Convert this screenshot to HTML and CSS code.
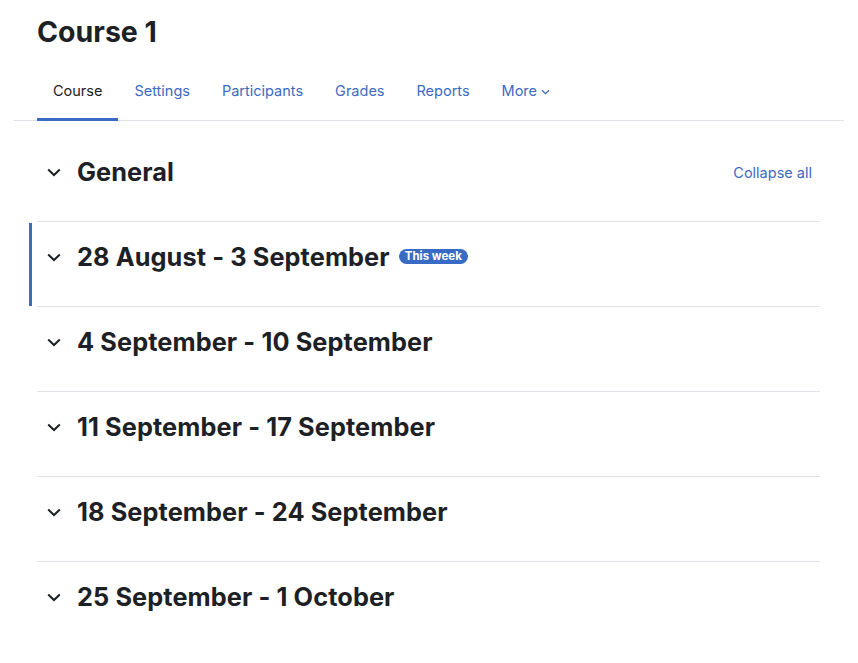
FILE: index.html
```html
<!DOCTYPE html>
<html lang="en">

<head>
      <meta charset="UTF-8">
      <meta name="viewport" content="width=device-width, initial-scale=1.0">
      <title>Course 1</title>
      <link rel="stylesheet" href="styles.css">
</head>

<body>
      <div id="page">
            <h1 class="page-title">Course 1</h1>
            <div class="secondary-nav">
                  <ul class="tabs">
                        <li class="tab active">Course</li>
                        <li class="tab">Settings</li>
                        <li class="tab">Participants</li>
                        <li class="tab">Grades</li>
                        <li class="tab">Reports</li>
                        <li class="tab">More
                              <svg class="caret" width="9" height="6" viewBox="0 0 9 6">
                                    <path d="M1 1.2 L4.5 4.6 L8 1.2" fill="none" stroke="currentColor" stroke-width="1.3" />
                              </svg>
                        </li>
                  </ul>
            </div>
            <div class="course-content">
                  <div class="section">
                        <div class="section-head">
                              <span class="toggle">
                                    <svg width="14" height="9" viewBox="0 0 14 9">
                                          <path d="M1.2 1.5 L7 7 L12.8 1.5" fill="none" stroke="currentColor" stroke-width="2" />
                                    </svg>
                              </span>
                              <h3 class="section-name">General</h3>
                              <a class="collapse-all">Collapse all</a>
                        </div>
                  </div>
                  <div class="section current">
                        <div class="section-head">
                              <span class="toggle">
                                    <svg width="14" height="9" viewBox="0 0 14 9">
                                          <path d="M1.2 1.5 L7 7 L12.8 1.5" fill="none" stroke="currentColor" stroke-width="2" />
                                    </svg>
                              </span>
                              <h3 class="section-name">28 August - 3 September</h3>
                              <span class="badge">This week</span>
                        </div>
                  </div>
                  <div class="section">
                        <div class="section-head">
                              <span class="toggle">
                                    <svg width="14" height="9" viewBox="0 0 14 9">
                                          <path d="M1.2 1.5 L7 7 L12.8 1.5" fill="none" stroke="currentColor" stroke-width="2" />
                                    </svg>
                              </span>
                              <h3 class="section-name">4 September - 10 September</h3>
                        </div>
                  </div>
                  <div class="section">
                        <div class="section-head">
                              <span class="toggle">
                                    <svg width="14" height="9" viewBox="0 0 14 9">
                                          <path d="M1.2 1.5 L7 7 L12.8 1.5" fill="none" stroke="currentColor" stroke-width="2" />
                                    </svg>
                              </span>
                              <h3 class="section-name">11 September - 17 September</h3>
                        </div>
                  </div>
                  <div class="section">
                        <div class="section-head">
                              <span class="toggle">
                                    <svg width="14" height="9" viewBox="0 0 14 9">
                                          <path d="M1.2 1.5 L7 7 L12.8 1.5" fill="none" stroke="currentColor" stroke-width="2" />
                                    </svg>
                              </span>
                              <h3 class="section-name">18 September - 24 September</h3>
                        </div>
                  </div>
                  <div class="section">
                        <div class="section-head">
                              <span class="toggle">
                                    <svg width="14" height="9" viewBox="0 0 14 9">
                                          <path d="M1.2 1.5 L7 7 L12.8 1.5" fill="none" stroke="currentColor" stroke-width="2" />
                                    </svg>
                              </span>
                              <h3 class="section-name">25 September - 1 October</h3>
                        </div>
                  </div>
            </div>
      </div>
</body>

</html>
```

FILE: styles.css
```css
* {
      box-sizing: border-box;
      font-family: Inter, Roboto, "Liberation Sans", sans-serif;
}

body {
      margin: 0;
      padding: 0;
      background: #fff;
      color: #1d2125;
}

#page {
      padding: 14px 0 0 0;
}

.page-title {
      margin: 0 0 20px 37px;
      font-size: 28.5px;
      line-height: 36px;
      font-weight: 700;
}

.secondary-nav {
      margin: 0 14px;
}

.tabs {
      display: flex;
      list-style: none;
      margin: 0;
      padding: 0 0 0 23px;
      border-bottom: 1px solid #dee2e6;
}

.tab {
      padding: 10px 16px 16px 16px;
      line-height: 22px;
      font-size: 14.5px;
      color: #3a6bc4;
      border-bottom: 3px solid transparent;
      margin-bottom: -1px;
      display: flex;
      align-items: center;
}

.tab.active {
      color: #1d2125;
      border-bottom-color: #3a6bc4;
}

.caret {
      margin-left: 4px;
      margin-top: 1px;
}

.course-content {
      margin: 15px 38px 0 37px;
}

.section {
      position: relative;
      border-top: 1px solid #dee2e6;
      padding: 20px 0 34px 0;
}

.section:first-child {
      border-top-color: transparent;
}

.section.current::before {
      content: "";
      position: absolute;
      left: -8px;
      top: 1px;
      bottom: 0;
      width: 3px;
      background: #3a6bc4;
}

.section-head {
      display: flex;
      align-items: center;
      height: 30px;
}

.toggle {
      width: 34px;
      margin-right: 6px;
      display: flex;
      justify-content: center;
      color: #1d2125;
}

.section-name {
      margin: 0;
      font-size: 25.3px;
      line-height: 30px;
      font-weight: 700;
      letter-spacing: 0.1px;
}

.collapse-all {
      margin-left: auto;
      margin-right: 8px;
      font-size: 14.5px;
      color: #3a6bc4;
}

.badge {
      margin-left: 9px;
      background: #3a6bc4;
      color: #fff;
      font-size: 11.5px;
      font-weight: 700;
      line-height: 15px;
      padding: 0 6px;
      border-radius: 8px;
      margin-top: -1px;
}
```
